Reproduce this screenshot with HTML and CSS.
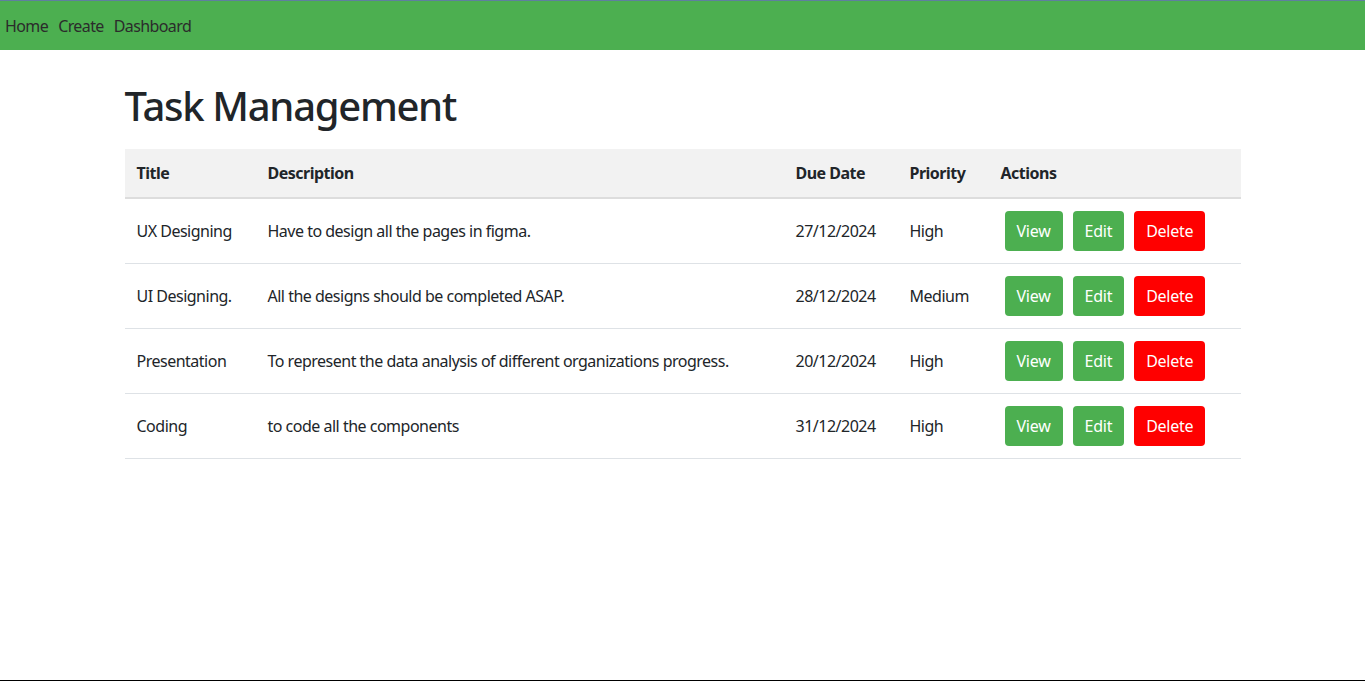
FILE: index.html
```html
<!DOCTYPE html>
<html lang="en">
<head>
<meta charset="utf-8">
<title>Task Management</title>
<link rel="stylesheet" href="styles.css">
</head>
<body>
<div class="page">
  <nav class="navbar">
    <a href="#" class="nav-link">Home</a>
    <a href="#" class="nav-link">Create</a>
    <a href="#" class="nav-link">Dashboard</a>
  </nav>
  <main class="container">
    <h1 class="title">Task Management</h1>
    <table class="table">
      <colgroup>
        <col class="c-title"><col class="c-desc"><col class="c-date"><col class="c-prio"><col class="c-actions">
      </colgroup>
      <thead>
        <tr><th>Title</th><th>Description</th><th>Due Date</th><th>Priority</th><th>Actions</th></tr>
      </thead>
      <tbody>
        <tr>
          <td>UX Designing</td><td>Have to design all the pages in figma.</td><td>27/12/2024</td><td>High</td>
          <td><div class="actions"><button class="btn btn-green">View</button><button class="btn btn-green">Edit</button><button class="btn btn-red">Delete</button></div></td>
        </tr>
        <tr>
          <td>UI Designing.</td><td>All the designs should be completed ASAP.</td><td>28/12/2024</td><td>Medium</td>
          <td><div class="actions"><button class="btn btn-green">View</button><button class="btn btn-green">Edit</button><button class="btn btn-red">Delete</button></div></td>
        </tr>
        <tr>
          <td>Presentation</td><td>To represent the data analysis of different organizations progress.</td><td>20/12/2024</td><td>High</td>
          <td><div class="actions"><button class="btn btn-green">View</button><button class="btn btn-green">Edit</button><button class="btn btn-red">Delete</button></div></td>
        </tr>
        <tr>
          <td>Coding</td><td>to code all the components</td><td>31/12/2024</td><td>High</td>
          <td><div class="actions"><button class="btn btn-green">View</button><button class="btn btn-green">Edit</button><button class="btn btn-red">Delete</button></div></td>
        </tr>
      </tbody>
    </table>
  </main>
</div>
</body>
</html>
```
FILE: styles.css
```css
* { box-sizing: border-box; }
html, body { margin: 0; padding: 0; }
body {
  font-family: "Noto Sans", "Open Sans", sans-serif;
  font-size: 16px;
  line-height: 1.5;
  letter-spacing: -0.5px;
  color: #212529;
  background: #fff;
}
.page {
  min-height: 100vh;
  border-top: 1px solid #5f7f9f;
  border-bottom: 1px solid #000;
}
.navbar {
  background: #4caf50;
  height: 49px;
  display: flex;
  align-items: center;
  gap: 10px;
  padding: 0 5px;
}
.nav-link {
  color: #2b2b2b;
  text-decoration: none;
  font-size: 16px;
  letter-spacing: -0.6px;
}
.container {
  width: 1116px;
  margin: 0 auto;
  padding-top: 32px;
}
.title {
  font-size: 40px;
  font-weight: 500;
  line-height: 48px;
  letter-spacing: -1.3px;
  margin: 0 0 19px;
}
.table {
  width: 100%;
  border-collapse: collapse;
  table-layout: fixed;
}
.c-title { width: 131px; }
.c-desc { width: 528px; }
.c-date { width: 114px; }
.c-prio { width: 91px; }
.c-actions { width: 252px; }
.table th {
  background: #f2f2f2;
  text-align: left;
  font-weight: 700;
  padding: 12px;
  height: 48px;
  border-bottom: 2px solid #dddddd;
}
.table td {
  padding: 12px;
  height: 65px;
  border-bottom: 1px solid #dee2e6;
  vertical-align: middle;
  white-space: nowrap;
}
.actions {
  display: flex;
  gap: 10px;
  padding-left: 4px;
}
.btn {
  font-family: inherit;
  font-size: 16px;
  line-height: 24px;
  letter-spacing: -0.25px;
  padding: 8px 12px;
  border: none;
  border-radius: 4px;
  color: #fff;
  cursor: pointer;
}
.btn-green { background: #4caf50; }
.btn-red { background: #ff0000; }
```
